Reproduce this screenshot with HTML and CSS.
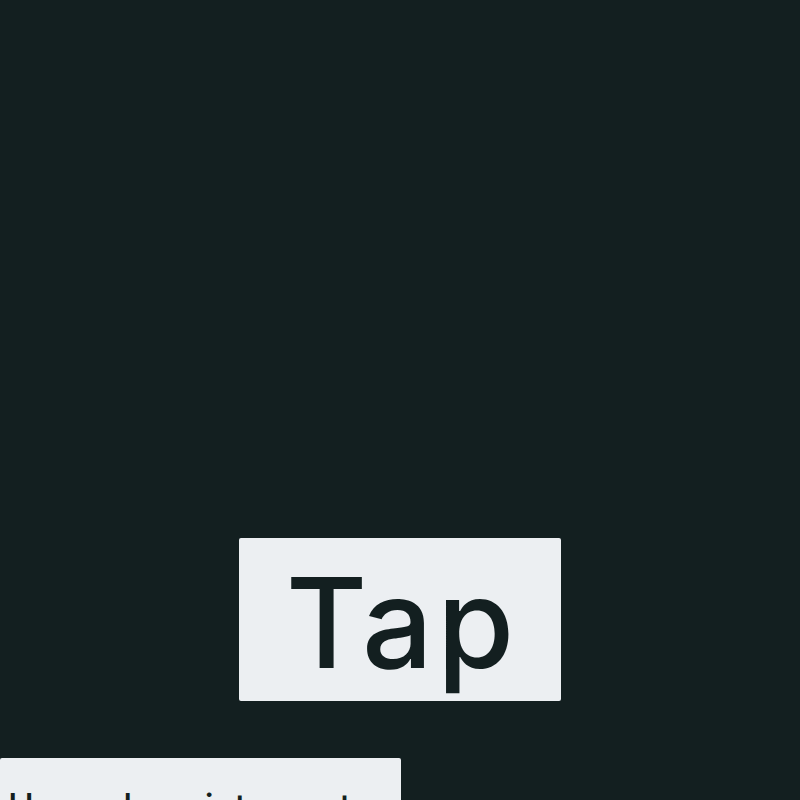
FILE: index.html
```html
<!DOCTYPE html>
<html lang="en">
<head>
    <meta charset="UTF-8">
    <meta name="viewport" content="width=device-width, initial-scale=1.0">
    <title>Tap</title>
    <link rel="stylesheet" href="styles.css">
</head>
<body>

    <div class="screen">
        <div class="tap-area">
            <button class="tap-button">Tap</button>
        </div>

        <div class="upgrade">
            <button class="upgrade-button">Upgrade points per tap</button>
        </div>
    </div>

</body>
</html>
```

FILE: styles.css
```css
body {
    margin: 0;
    padding: 0;
    background-color: #131f20; /* Dark teal background */
    font-family: Inter, "Noto Sans", sans-serif;
    overflow: hidden;
}

.screen {
    height: 800px;
    display: flex;
    flex-direction: column;
    justify-content: flex-end;
    overflow: hidden;
}

.tap-area {
    display: flex;
    justify-content: center;
}

.tap-button {
    font-family: inherit;
    font-size: 125px;
    font-weight: 500;
    letter-spacing: 4px;
    line-height: 151px;
    padding: 9px 43px 3px 47px;
    background-color: #eceff2;
    color: #131f20;
    border: none;
    border-radius: 2px;
    cursor: pointer;
}

/* Upgrade button sits below, left side */
.upgrade {
    margin-top: 57px;
    height: 42px;
}

.upgrade-button {
    font-family: inherit;
    font-size: 35px;
    font-weight: 500;
    padding: 27px 8px 19px;
    background-color: #eceff2;
    color: #131f20;
    border: none;
    border-radius: 2px;
    cursor: pointer;
}
```
